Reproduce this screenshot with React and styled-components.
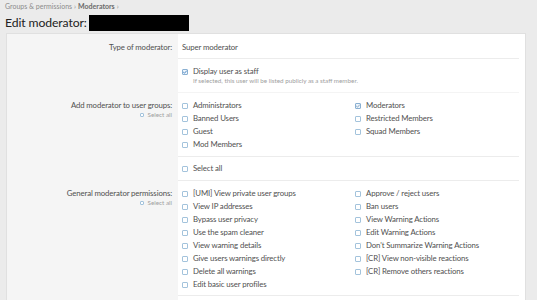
import React from "react";
import styled, { createGlobalStyle } from "styled-components";

const GlobalStyle = createGlobalStyle`
  html, body { margin: 0; padding: 0; }
  body {
    background: #ebebeb;
    font-family: Lato, "Open Sans", sans-serif;
    color: #333;
  }
`;

const Page = styled.div`
  padding: 2px 11px 0 5px;
`;

const Breadcrumb = styled.div`
  display: flex;
  align-items: center;
  gap: 2px;
  font-size: 7px;
  line-height: 9px;
  color: #8c8c8c;
`;

const Crumb = styled.span`
  font-weight: ${(p) => (p.$current ? 700 : 400)};
  color: ${(p) => (p.$current ? "#6a6a6a" : "#8c8c8c")};
`;

const Title = styled.h1`
  display: flex;
  align-items: center;
  gap: 2px;
  margin: 3px 0 1px;
  font-size: 12.2px;
  letter-spacing: -0.1px;
  line-height: 18px;
  font-weight: 400;
  color: #222;
`;

const Redacted = styled.span`
  display: inline-block;
  width: 100px;
  height: 16px;
  background: #000;
`;

const Panel = styled.div`
  margin-left: 1px;
  border: 1px solid #e0e0e0;
  background: #f5f5f5;
`;

const Row = styled.div`
  display: grid;
  grid-template-columns: 171px 1fr;
`;

const Label = styled.div`
  padding: ${(p) => p.$pad || "5px"} 6px 0 0;
  text-align: right;
  font-size: 7.8px;
  letter-spacing: -0.12px;
  line-height: 13px;
  color: #505050;
`;

const SubLabel = styled.div`
  display: flex;
  justify-content: flex-end;
  align-items: center;
  gap: 3px;
  margin-top: -2px;
  font-size: 6.3px;
  letter-spacing: 0;
  line-height: 9px;
  color: #a0a0a0;
`;

const Value = styled.div`
  background: #fff;
  padding-right: 6px;
`;

const ValueInner = styled.div`
  padding: ${(p) => p.$pad || "5px 0 5px 4px"};
  border-bottom: 1px solid ${(p) => p.$sep || "transparent"};
  font-size: 7.8px;
  letter-spacing: -0.12px;
  line-height: 13px;
  color: #505050;
`;

const Grid = styled.div`
  display: grid;
  grid-template-columns: 173px 1fr;
`;

const CheckRow = styled.label`
  display: flex;
  align-items: center;
  gap: 5px;
  height: 13px;
  white-space: nowrap;
`;

const Box = styled.span`
  flex: none;
  width: ${(p) => p.$size || 4}px;
  height: ${(p) => p.$size || 4}px;
  border: 1px solid ${(p) => (p.$checked ? "#8ab0d2" : "#a3c3dc")};
  border-radius: 1px;
  background: ${(p) => (p.$checked ? "#eef5fb" : "#fff")};
  display: inline-flex;
  align-items: center;
  justify-content: center;
`;

const Hint = styled.div`
  margin-top: -2px;
  padding-left: 11px;
  font-size: 6.3px;
  letter-spacing: 0;
  line-height: 9px;
  color: #a0a0a0;
`;

function Tick({ color }) {
  return (
    <svg width="4" height="4" viewBox="0 0 4 4" style={{ overflow: "visible" }}>
      <path d="M0.2 2 L1.5 3.2 L3.8 0.6" fill="none" stroke={color} strokeWidth="0.9" />
    </svg>
  );
}

function Checkbox({ checked, label, strong }) {
  return (
    <CheckRow>
      <Box $checked={checked}>{checked && <Tick color={strong ? "#3f7fbf" : "#7f9fbd"} />}</Box>
      {label}
    </CheckRow>
  );
}

const groupsLeft = ["Administrators", "Banned Users", "Guest", "Mod Members"];
const groupsRight = ["Moderators", "Restricted Members", "Squad Members"];

const permsLeft = [
  "[UMI] View private user groups",
  "View IP addresses",
  "Bypass user privacy",
  "Use the spam cleaner",
  "View warning details",
  "Give users warnings directly",
  "Delete all warnings",
  "Edit basic user profiles",
];
const permsRight = [
  "Approve / reject users",
  "Ban users",
  "View Warning Actions",
  "Edit Warning Actions",
  "Don't Summarize Warning Actions",
  "[CR] View non-visible reactions",
  "[CR] Remove others reactions",
];

function Column({ items, checked = [] }) {
  return (
    <div>
      {items.map((it) => (
        <Checkbox key={it} label={it} checked={checked.includes(it)} />
      ))}
    </div>
  );
}

export default function App() {
  return (
    <>
      <GlobalStyle />
      <Page>
        <Breadcrumb>
          <Crumb>Groups &amp; permissions</Crumb>
          <span>›</span>
          <Crumb $current>Moderators</Crumb>
          <span>›</span>
        </Breadcrumb>
        <Title>
          Edit moderator: <Redacted />
        </Title>
        <Panel>
          <Row>
            <Label $pad="7px">Type of moderator:</Label>
            <Value>
              <ValueInner $sep="#ececec" $pad="7px 0 4px 4px">Super moderator</ValueInner>
            </Value>
          </Row>
          <Row>
            <Label />
            <Value>
              <ValueInner $sep="#f4f4f4" $pad="6px 0 7px 4px">
                <Checkbox checked strong label="Display user as staff" />
                <Hint>If selected, this user will be listed publicly as a staff member.</Hint>
              </ValueInner>
            </Value>
          </Row>
          <Row>
            <Label $pad="6px">
              Add moderator to user groups:
              <SubLabel>
                <Box $size={2} />
                Select all
              </SubLabel>
            </Label>
            <Value>
              <ValueInner $sep="#ececec" $pad="6px 0 5px 4px">
                <Grid>
                  <Column items={groupsLeft} />
                  <Column items={groupsRight} checked={["Moderators"]} />
                </Grid>
              </ValueInner>
            </Value>
          </Row>
          <Row>
            <Label />
            <Value>
              <ValueInner $sep="#ececec" $pad="5px 0 5px 4px">
                <Checkbox label="Select all" />
              </ValueInner>
            </Value>
          </Row>
          <Row>
            <Label $pad="6px">
              General moderator permissions:
              <SubLabel>
                <Box $size={2} />
                Select all
              </SubLabel>
            </Label>
            <Value>
              <ValueInner $sep="#ececec" $pad="6px 0 4px 4px">
                <Grid>
                  <Column items={permsLeft} />
                  <Column items={permsRight} />
                </Grid>
              </ValueInner>
            </Value>
          </Row>
          <Row>
            <Label />
            <Value>
              <ValueInner $pad="6px 0 6px 4px" />
            </Value>
          </Row>
        </Panel>
      </Page>
    </>
  );
}
